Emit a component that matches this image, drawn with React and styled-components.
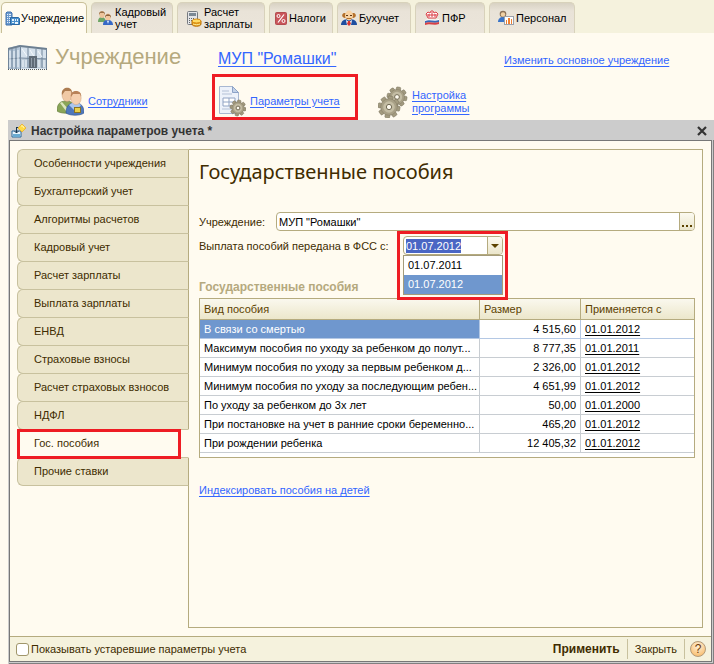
import React, { useEffect, useRef, useState } from 'react'
import styled, { createGlobalStyle, css } from 'styled-components'

const GlobalStyle = createGlobalStyle`
  * {
    box-sizing: border-box;
  }

  body {
    margin: 0;
    background: #fffbf0;
    color: #402c00;
    font: 11px/14px "Liberation Sans", Arial, sans-serif;
  }

  button, input, select {
    font: inherit;
    color: inherit;
  }

  svg {
    display: block;
    flex: none;
  }
`

const highlight = css`
  border: 3px solid #ee1c24;
  pointer-events: none;
`

const Page = styled.div`
  display: flex;
  flex-direction: column;
  min-height: 100vh;
`

const TopTabs = styled.nav`
  display: flex;
  gap: 4px;
  height: 33px;
  padding: 2px 1px 0;
  background: #f5f2dd;
`

const TopTab = styled.button`
  display: flex;
  align-items: center;
  gap: ${({ $active }) => ($active ? 1 : 2)}px;
  width: ${({ $width }) => $width}px;
  padding: 0 0 0 ${({ $indent }) => $indent}px;
  border: 1px solid #d8d2bb;
  border-bottom: 0;
  border-radius: 5px 5px 0 0;
  background: linear-gradient(#d8d2c3, #e9e3d8 8px, #ebe5da);
  color: #000;
  line-height: 12px;
  text-align: left;
  white-space: pre-line;

  ${({ $active }) =>
    $active &&
    `
    background: #fffbf0;
    border-color: #c8bf98;
  `}
`

const Link = styled.a`
  color: #3366ff;
  text-decoration: underline;
  text-underline-offset: 2px;
`

const Header = styled.header`
  display: grid;
  grid-template-columns: 210px 286px 1fr;
  align-items: end;
  height: 41px;
  padding: 0 8px 4px;
`

const HeaderCell = styled.div`
  line-height: 20px;
`

const Brand = styled.div`
  display: flex;
  align-items: center;
  gap: 8px;
`

const BrandTitle = styled.h1`
  margin: 0;
  color: #b5a97e;
  font-size: 22px;
  line-height: 26px;
  font-weight: 400;
`

const OrgLink = styled(Link)`
  font-size: 16px;
`

const Shortcuts = styled.div`
  display: grid;
  grid-template-columns: 155px 166px 1fr;
  align-items: center;
  height: 46px;
  padding-left: 57px;
`

const Shortcut = styled.div`
  display: flex;
  align-items: center;
  gap: 4px;
  height: 46px;
  padding-top: 9px;
  line-height: 13px;
`

const MarkedShortcut = styled(Shortcut)`
  ${highlight}
  pointer-events: auto;
  width: 146px;
  padding: 8px 0 0 3px;
`

const Window = styled.section`
  flex: 1;
  display: flex;
  flex-direction: column;
  margin-left: 8px;
  border: 1px solid #ccc;
  border-width: 0 0 0 1px;
  box-shadow: inset -1px -1px #808080, inset -2px -2px #ccc;
  padding: 0 2px 2px 0;
`

const TitleBar = styled.div`
  display: flex;
  align-items: center;
  gap: 5px;
  height: 20px;
  margin-right: -2px;
  padding: 2px 7px 0 2px;
  background: #ccc;
  color: #333;
`

const WindowTitle = styled.h2`
  flex: 1;
  margin: 0;
  font-size: 12px;
  line-height: 16px;
`

const CloseButton = styled.button`
  padding: 0;
  border: 0;
  background: none;
`

const WindowBody = styled.div`
  flex: 1;
  display: flex;
  flex-direction: column;
  border: 1px solid #777;
`

const Columns = styled.div`
  flex: 1;
  display: flex;
  padding: 8px 8px 8px 7px;
`

const SideTabs = styled.nav`
  display: flex;
  flex-direction: column;
  width: 172px;

  &::after {
    content: '';
    flex: 1;
    border-right: 1px solid #b5ab7f;
  }
`

const SideTab = styled.button`
  position: relative;
  height: 29px;
  margin-bottom: -1px;
  padding: 0 0 2px 16px;
  border: 1px solid #c8c19e;
  border-right-color: #b5ab7f;
  border-radius: 6px 0 0 6px;
  background: #ece6cc;
  text-align: left;

  ${({ $active }) =>
    $active &&
    `
    background: #fffbf0;
    border-left-color: transparent;
    border-right-color: transparent;
    z-index: 1;
  `}
`

const SideMark = styled.span`
  ${highlight}
  position: absolute;
  inset: -1px 7px -2px -1px;
`

const Panel = styled.main`
  flex: 1;
  min-width: 0;
  padding: 10px 7px 16px 10px;
  border: 1px solid #b5ab7f;
  border-left: 0;
`

const PanelTitle = styled.h3`
  margin: 0 0 28px;
  font: 400 20px/24px "Noto Sans", sans-serif;
`

const Field = styled.div`
  display: flex;
  align-items: center;
  height: 19px;
  margin-bottom: 5px;
`

const Label = styled.label`
  width: ${({ $wide }) => ($wide ? 204 : 77)}px;
  white-space: nowrap;
`

const Control = styled.div`
  display: flex;
  flex: ${({ $width }) => ($width ? 'none' : 1)};
  width: ${({ $width }) => ($width ? `${$width}px` : 'auto')};
  height: 19px;
  border: 1px solid #b5ab7f;
  border-radius: 4px;
  background: #fff;
  overflow: hidden;
`

const TextInput = styled.input`
  flex: 1;
  min-width: 0;
  padding: 0 2px;
  border: 0;
  outline: 0;
  background: none;
  color: #000;

  &::selection {
    background: #4a66c4;
    color: #fff;
  }
`

const ControlButton = styled.button`
  display: flex;
  align-items: center;
  justify-content: center;
  width: 15px;
  padding: 0;
  border: 0;
  border-left: 1px solid #b5ab7f;
  background: linear-gradient(#fcfaf0, #ebe6cc);
  color: #5c4200;
`

const Combo = styled.div`
  position: relative;
  height: 19px;
`

const Options = styled.select`
  position: absolute;
  top: 19px;
  left: 0;
  z-index: 1;
  width: 100px;
  height: 40px;
  padding: 0;
  border: 1px solid #a49b7a;
  border-radius: 0;
  outline: 0;
  background: #fff;
  overflow: hidden;

  option {
    height: 19px;
    min-height: 19px;
    padding: 3px 4px 2px;
    color: #000;
    line-height: 14px;
  }

  option:checked {
    background: #6f97ce linear-gradient(#6f97ce, #6f97ce);
    color: #fff;
    -webkit-text-fill-color: #fff;
  }
`

const ComboMark = styled.span`
  ${highlight}
  position: absolute;
  top: -5px;
  left: -6px;
  z-index: 2;
  width: 111px;
  height: 69px;
`

const GroupTitle = styled.h4`
  margin: 25px 0 4px;
  color: #b5a97e;
  font-size: 12px;
  line-height: 14px;
`

const TableBox = styled.div`
  padding-bottom: 4px;
  border: 1px solid #b5ab7f;
  background: #fff;
`

const Table = styled.table`
  width: 100%;
  border-collapse: separate;
  border-spacing: 0;
  table-layout: fixed;
`

const Th = styled.th`
  width: ${({ $width }) => ($width ? `${$width}px` : 'auto')};
  height: 21px;
  padding: 0 4px;
  border-bottom: 1px solid #b5ab7f;
  background: linear-gradient(#faf8ee, #ece7cb);
  color: #5c4200;
  font-weight: 400;
  text-align: left;

  & + & {
    border-left: 1px solid #b5ab7f;
  }
`

const Td = styled.td`
  height: 19px;
  padding: 0 4px;
  border-bottom: 1px solid #c8cdd2;
  background: ${({ $selected }) => ($selected ? '#6f97ce' : '#fff')};
  color: ${({ $selected }) => ($selected ? '#fff' : '#000')};
  text-align: ${({ $right }) => ($right ? 'right' : 'left')};
  white-space: nowrap;

  & + & {
    border-left: 1px solid #c8cdd2;
  }

  &:first-child {
    padding-right: 0;
  }

  tr:first-child > & {
    border-color: #b4c8e4;
  }
`

const DateLink = styled(Link)`
  color: #000;
`

const IndexLink = styled(Link)`
  display: inline-block;
  margin-top: 25px;
`

const Footer = styled.footer`
  display: flex;
  align-items: center;
  height: 25px;
  padding: 0 5px 0 6px;
  border-top: 1px solid #b5ab7f;
  background: #f5f2dd;
`

const CheckLabel = styled.label`
  display: flex;
  align-items: center;
  gap: 2px;
  margin-right: auto;
`

const Checkbox = styled.input`
  appearance: none;
  width: 13px;
  height: 13px;
  margin: 0;
  border: 1px solid #a0966a;
  border-radius: 3px;
  background: #fff;

  &:checked {
    background: #b5a97e;
  }
`

const Command = styled.button`
  height: 20px;
  padding: 0 7px;
  border: 0;
  border-right: 1px solid #c8c19e;
  background: none;
  font-size: ${({ $primary }) => ($primary ? 12 : 11)}px;
  font-weight: ${({ $primary }) => ($primary ? 700 : 400)};
`

const HelpButton = styled.button`
  width: 16px;
  height: 16px;
  margin-left: 5px;
  padding: 0;
  border: 1px solid #b39a78;
  border-radius: 50%;
  background: radial-gradient(circle at 50% 30%, #fff0d8, #f7b45c);
  color: #6b3a0a;
  font-size: 12px;
  line-height: 14px;
`

const OfficeIcon = () => (
  <svg width="15" height="15" viewBox="0 0 15 15">
    <path d="M1 2l1-1h4l1 1v12H1z" fill="#6c9bd0" stroke="#3f70ad" />
    <path d="M2 3h1v1H2zM4 3h2v1H4zM2 5h1v1H2zM4 5h2v1H4zM2 7h1v1H2zM4 7h2v1H4zM2 9h1v1H2zM4 9h2v1H4zM2 11h1v1H2zM4 11h2v1H4z" fill="#e8f2fb" />
    <path d="M5.5 6.5h8l1 1v6h-9z" fill="#4a90cc" stroke="#2b68a3" />
    <path d="M7 8h2v2H7zM10 8h1v2h-1zM12 8h1v2h-1zM7 11h2v1H7zM10 11h3v2h-3z" fill="#e6f3fc" />
  </svg>
)

const StaffIcon = () => (
  <svg width="16" height="16" viewBox="0 0 16 16">
    <path d="M1 12c0-4 2-5 4-5s4 2 4 5z" fill="#6da565" />
    <ellipse cx="5" cy="4.5" rx="2.7" ry="3.5" fill="#edc49b" />
    <path d="M2 5C1 0 9 0 8 5L7 3H3z" fill="#9a7148" />
    <path d="M6 15c0-4 2-5 5-5s5 2 5 5z" fill="#3568c7" />
    <ellipse cx="11" cy="7" rx="2.7" ry="3.5" fill="#f2c79d" />
    <path d="M8 8c-1-5 7-5 6 0l-1-2H9z" fill="#8b603a" />
    <path d="M10 11h2l-1 3z" fill="#dcebff" />
  </svg>
)

const PayrollIcon = () => (
  <svg width="16" height="17" viewBox="0 0 16 17">
    <rect x="1.5" y="1.5" width="10" height="13" rx="1" fill="#e4e5e8" stroke="#777b80" />
    <path d="M3 3h7v3H3z" fill="#7c8994" />
    <path d="M3 8h1v1H3zM5 8h1v1H5zM7 8h1v1H7zM3 10h1v1H3zM5 10h1v1H5zM3 12h1v1H3z" fill="#61666b" />
    <path d="M6 11v3c0 3 9 3 9 0v-3z" fill="#e39b18" stroke="#b97007" />
    <ellipse cx="10.5" cy="11" rx="4.5" ry="2" fill="#ffdc66" stroke="#d78c10" />
    <path d="M7 14c2 1 5 1 7 0" fill="none" stroke="#fff0a0" />
  </svg>
)

const TaxIcon = () => (
  <svg width="12" height="13" viewBox="0 0 12 13">
    <rect x=".5" y=".5" width="11" height="12" rx="1" fill="#c9555b" stroke="#b34c50" />
    <path d="M9 2.5L3 10.5" stroke="#fff" strokeWidth="1.2" />
    <circle cx="3.5" cy="4" r="1.5" fill="none" stroke="#fff" />
    <circle cx="8.5" cy="9" r="1.5" fill="none" stroke="#fff" />
  </svg>
)

const AccountantIcon = () => (
  <svg width="16" height="16" viewBox="0 0 16 16">
    <path d="M0 15c0-4 3-6 8-6s8 2 8 6z" fill="#1f4e9f" />
    <path d="M3 3c-3 1-2 5 1 5h8c3 0 4-4 1-5z" fill="#b5712c" />
    <ellipse cx="8" cy="5.5" rx="4" ry="5" fill="#f8d3a4" />
    <path d="M5 5h2v1H5zM9 5h2v1H9z" fill="#5a3517" />
    <path d="M5 8h6l-1 1H6z" fill="#b5712c" />
    <path d="M5 10l3 2 3-2-1 5H6z" fill="#fff" />
    <path d="M7 11h2l1 3-2 2-2-2z" fill="#d6342f" />
  </svg>
)

const PensionIcon = () => (
  <svg width="16" height="16" viewBox="0 0 16 16">
    <path d="M4 8L2 4l2-2 2 1 1-2h2l1 2 2-1 2 2-2 4z" fill="#fff" stroke="#db3d45" />
    <path d="M5 4v3M8 2v5M11 4v3M3 5h10" stroke="#db3d45" />
    <path d="M1 10c5-2 9 1 14-1v2c-5 2-9-1-14 1z" fill="#fff" />
    <path d="M1 11c5-2 9 1 14-1v2c-5 2-9-1-14 1z" fill="#3a67b4" />
    <path d="M1 13c5-2 9 1 14-1v2c-5 2-9-1-14 1z" fill="#d84045" />
  </svg>
)

const PersonnelIcon = () => (
  <svg width="16" height="16" viewBox="0 0 16 16">
    <path d="M0 12c0-3 2-5 5-5s5 2 5 5z" fill="#3974c8" />
    <circle cx="5" cy="4" r="3.3" fill="#8d7358" />
    <circle cx="5" cy="4.5" r="2.2" fill="#f1d1a4" />
    <rect x="6.5" y="6.5" width="9" height="8" fill="#fff" stroke="#9aa0aa" />
    <path d="M8 10h1v4H8zM10 8h2v6h-2zM13 9h1v5h-1z" fill="#f08030" />
  </svg>
)

const BuildingIcon = () => (
  <svg width="39" height="25" viewBox="0 0 39 25">
    <path d="M0 3l12-3 27 3v21H0z" fill="#d5e1ec" />
    <path d="M0 3l12-3v24H0z" fill="#b4c6d8" />
    <path d="M13 14l25-1v10H13z" fill="#bccbd8" />
    <path d="M0 3l12-3 27 3v2L12 2 0 5z" fill="#6d7f90" />
    <path d="M.5 4v20M4 4v20M8 3v21M12.5 1v23M20 3v20M28 4v19M34 4v19M38.5 4v20M0 14l12-1 26 1" fill="none" stroke="#71859a" />
    <path d="M14 4l5 7M22 5l5 8M30 6l4 6M15 15v7M18 15v7M31 15v7M36 15v7M2 6v16M6 6v16M10 5v17" fill="none" stroke="#f3f8fc" />
    <path d="M21 11h8v12h-8z" fill="#5f6b77" />
    <path d="M23 13h1v9h-1zM26 13h1v9h-1z" fill="#8f9ca8" />
    <path d="M0 24.5h39" stroke="#4e5a64" strokeDasharray="1 1" />
  </svg>
)

const EmployeesIcon = () => (
  <svg width="27" height="29" viewBox="0 0 27 29">
    <path d="M0 24c0-7 3-10 9-10s9 3 9 10c-4 3-14 3-18 0z" fill="#8aa557" stroke="#5d7436" strokeWidth=".6" />
    <path d="M3 16l6 8 3-1-7-8z" fill="#dbe5bd" />
    <ellipse cx="10" cy="8" rx="5" ry="6.5" fill="#f0c9a5" stroke="#c0906a" strokeWidth=".4" />
    <path d="M5 8C3-1 17-2 15 8l-1-4-6 0z" fill="#ad7c50" />
    <path d="M9 26c0-7 3-10 9-10s9 3 9 10c-4 3-14 3-18 0z" fill="#4f78bb" stroke="#2f5390" strokeWidth=".6" />
    <path d="M12 18l5 5h3l4-5-3-2h-6z" fill="#a9c6ef" />
    <ellipse cx="19" cy="11" rx="5.2" ry="6.7" fill="#f5cfae" stroke="#c99873" strokeWidth=".4" />
    <path d="M14 10C12 2 26 2 24 10l-1-3-7 0z" fill="#b98258" />
    <rect x="17.5" y="20.5" width="6" height="5" fill="#e8d04b" stroke="#8a7424" />
  </svg>
)

const gearTeeth = [0, 45, 90, 135, 180, 225, 270, 315]

const Gear = ({ x, y, r }) => (
  <g transform={`translate(${x} ${y})`}>
    {gearTeeth.map((angle) => (
      <rect key={angle} x={-r * 0.22} y={-r} width={r * 0.44} height={r} rx="1" fill="#a39b80" stroke="#77705a" strokeWidth=".5" transform={`rotate(${angle + 10})`} />
    ))}
    <circle r={r * 0.75} fill="#a8a086" stroke="#827a62" strokeWidth=".5" />
    <circle r={r * 0.52} fill="#c4bda4" />
    <circle r={r * 0.24} fill="#fffbf0" stroke="#716a54" />
  </g>
)

const ParametersIcon = () => (
  <svg width="28" height="32" viewBox="0 0 28 32">
    <path d="M1.5 1.5h13l6 6v21h-19z" fill="#edf2fa" stroke="#a8b8d2" />
    <path d="M14.5 1.5v6h6z" fill="#c3d2e8" stroke="#8da3c7" />
    <path d="M4 6h7M4 9h10M4 24h10" stroke="#b4c1d6" />
    <path d="M5 13h12v8H5zM5 17h12M11 13v8" fill="#fff" stroke="#91a4c4" />
    <Gear x={20} y={23} r={8} />
  </svg>
)

const SettingsIcon = () => (
  <svg width="30" height="32" viewBox="0 0 30 32">
    <Gear x={19} y={11} r={10} />
    <Gear x={11} y={21} r={11} />
  </svg>
)

const WindowIcon = () => (
  <svg width="15" height="15" viewBox="0 0 15 15">
    <path d="M1 7h9v6H1z" fill="#e8f5fc" stroke="#28699b" />
    <path d="M2 10h7v3H2z" fill="#69abd1" />
    <path d="M5.5 3v6M3.5 7l2 2 2-2M5.5 3.5h2" fill="none" stroke="#17354d" />
    <path d="M11 0l4 4-4 4-4-4z" fill="#ffda45" stroke="#eba91b" strokeWidth=".7" />
    <path d="M10 2l2 0 1 2" fill="none" stroke="#fff6b3" />
  </svg>
)

const topTabs = [
  { label: 'Учреждение', icon: OfficeIcon, width: 86, indent: 3, active: true },
  { label: 'Кадровый\nучет', icon: StaffIcon, width: 82, indent: 5 },
  { label: 'Расчет\nзарплаты', icon: PayrollIcon, width: 88, indent: 8 },
  { label: 'Налоги', icon: TaxIcon, width: 64, indent: 5 },
  { label: 'Бухучет', icon: AccountantIcon, width: 74, indent: 3 },
  { label: 'ПФР', icon: PensionIcon, width: 70, indent: 8 },
  { label: 'Персонал', icon: PersonnelIcon, width: 86, indent: 8 },
]

const sideTabs = [
  'Особенности учреждения',
  'Бухгалтерский учет',
  'Алгоритмы расчетов',
  'Кадровый учет',
  'Расчет зарплаты',
  'Выплата зарплаты',
  'ЕНВД',
  'Страховые взносы',
  'Расчет страховых взносов',
  'НДФЛ',
  'Гос. пособия',
  'Прочие ставки',
]

const benefits = [
  ['В связи со смертью', '4 515,60', '01.01.2012'],
  ['Максимум пособия по уходу за ребенком до полут...', '8 777,35', '01.01.2011'],
  ['Минимум пособия по уходу за первым ребенком д...', '2 326,00', '01.01.2012'],
  ['Минимум пособия по уходу за последующим ребен...', '4 651,99', '01.01.2012'],
  ['По уходу за ребенком до 3х лет', '50,00', '01.01.2000'],
  ['При постановке на учет в ранние сроки беременно...', '465,20', '01.01.2012'],
  ['При рождении ребенка', '12 405,32', '01.01.2012'],
]

function DateCombo() {
  const [date, setDate] = useState('01.07.2012')
  const input = useRef(null)

  useEffect(() => {
    input.current.focus()
    input.current.select()
  }, [date])

  return (
    <Combo>
      <Control $width={100}>
        <TextInput id="fss-date" ref={input} value={date} readOnly />
        <ControlButton type="button" aria-label="Выбрать дату">
          <svg width="8" height="4" viewBox="0 0 8 4"><path d="M0 0h8L4 4z" fill="#5c4200" /></svg>
        </ControlButton>
      </Control>
      <Options size={2} aria-label="Дата" value={date} onChange={(e) => setDate(e.target.value)}>
        <option>01.07.2011</option>
        <option>01.07.2012</option>
      </Options>
      <ComboMark />
    </Combo>
  )
}

function BenefitsTable() {
  return (
    <TableBox>
      <Table>
        <thead>
          <tr>
            <Th>Вид пособия</Th>
            <Th $width={101}>Размер</Th>
            <Th $width={114}>Применяется с</Th>
          </tr>
        </thead>
        <tbody>
          {benefits.map(([name, amount, date], i) => (
            <tr key={name}>
              <Td $selected={i === 0}>{name}</Td>
              <Td $right>{amount}</Td>
              <Td><DateLink href="#">{date}</DateLink></Td>
            </tr>
          ))}
        </tbody>
      </Table>
    </TableBox>
  )
}

export default function App() {
  const [section, setSection] = useState('Гос. пособия')

  return (
    <Page>
      <GlobalStyle />
      <TopTabs>
        {topTabs.map(({ label, icon: Icon, width, indent, active }) => (
          <TopTab key={label} type="button" $width={width} $indent={indent} $active={active}>
            <Icon />
            {label}
          </TopTab>
        ))}
      </TopTabs>

      <Header>
        <Brand>
          <BuildingIcon />
          <BrandTitle>Учреждение</BrandTitle>
        </Brand>
        <HeaderCell><OrgLink href="#">МУП "Ромашки"</OrgLink></HeaderCell>
        <HeaderCell><Link href="#">Изменить основное учреждение</Link></HeaderCell>
      </Header>

      <Shortcuts>
        <Shortcut>
          <EmployeesIcon />
          <Link href="#">Сотрудники</Link>
        </Shortcut>
        <MarkedShortcut>
          <ParametersIcon />
          <Link href="#">Параметры учета</Link>
        </MarkedShortcut>
        <Shortcut>
          <SettingsIcon />
          <Link href="#">Настройка<br />программы</Link>
        </Shortcut>
      </Shortcuts>

      <Window>
        <TitleBar>
          <WindowIcon />
          <WindowTitle>Настройка параметров учета *</WindowTitle>
          <CloseButton type="button" aria-label="Закрыть окно">
            <svg width="10" height="10" viewBox="0 0 10 10"><path d="M1 1l8 8M9 1l-8 8" stroke="#333" strokeWidth="2.2" /></svg>
          </CloseButton>
        </TitleBar>
        <WindowBody>
          <Columns>
            <SideTabs>
              {sideTabs.map((name) => (
                <SideTab key={name} type="button" $active={name === section} onClick={() => setSection(name)}>
                  {name}
                  {name === section && <SideMark />}
                </SideTab>
              ))}
            </SideTabs>
            <Panel>
              <PanelTitle>Государственные пособия</PanelTitle>
              <Field>
                <Label htmlFor="org">Учреждение:</Label>
                <Control>
                  <TextInput id="org" defaultValue={'МУП "Ромашки"'} />
                  <ControlButton type="button" aria-label="Выбрать учреждение">
                    <svg width="10" height="12" viewBox="0 0 10 12"><path d="M0 9h2v2H0zM4 9h2v2H4zM8 9h2v2H8z" fill="#5c4200" /></svg>
                  </ControlButton>
                </Control>
              </Field>
              <Field>
                <Label htmlFor="fss-date" $wide>Выплата пособий передана в ФСС с:</Label>
                <DateCombo />
              </Field>
              <GroupTitle>Государственные пособия</GroupTitle>
              <BenefitsTable />
              <IndexLink href="#">Индексировать пособия на детей</IndexLink>
            </Panel>
          </Columns>
          <Footer>
            <CheckLabel>
              <Checkbox type="checkbox" />
              Показывать устаревшие параметры учета
            </CheckLabel>
            <Command type="button" $primary>Применить</Command>
            <Command type="button">Закрыть</Command>
            <HelpButton type="button" aria-label="Справка">?</HelpButton>
          </Footer>
        </WindowBody>
      </Window>
    </Page>
  )
}
